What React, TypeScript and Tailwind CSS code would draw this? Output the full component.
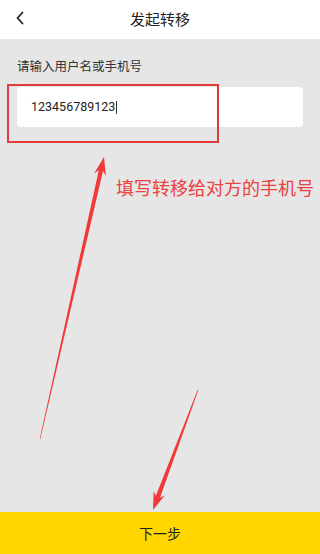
import React from "react";

const cjk = { fontFamily: '"Noto Sans CJK SC", "Noto Sans", sans-serif' };

function BackIcon() {
  return (
    <svg width="10" height="14" viewBox="0 0 10 14" fill="none">
      <path d="M7.5 1.5 L2.5 7 L7.5 12.5" stroke="#222" strokeWidth="1.8" strokeLinecap="round" strokeLinejoin="round" />
    </svg>
  );
}

// annotation overlay: hand-drawn red arrows from the screenshot
function Arrows() {
  return (
    <svg className="absolute inset-0 pointer-events-none" width="320" height="554" viewBox="0 0 320 554">
      <polygon
        fill="#f03a3a"
        points="39.7,438.9 98.8,170.2 94.2,173.3 104,157 105.9,175.9 103,171.1 40.3,439.1"
      />
      <polygon
        fill="#f03a3a"
        points="197.6,389.9 155.8,496.1 153.7,491.1 153,510 164.9,495.3 160,497.7 198.4,390.1"
      />
    </svg>
  );
}

export default function App() {
  return (
    <div className="relative w-[320px] h-[554px] flex flex-col bg-[#e6e6e6] overflow-hidden" style={cjk}>
      <div className="h-[39px] bg-white flex items-center relative shrink-0">
        <div className="absolute left-[15px] top-[11px]">
          <BackIcon />
        </div>
        <div className="flex-1 text-center text-[15px] text-[#222]">发起转移</div>
      </div>

      <div className="px-[17px] pt-[19px]">
        <div className="text-[12.5px] text-[#333] leading-[16px]">请输入用户名或手机号</div>
        <div className="mt-[13px] h-[40px] bg-white rounded-[4px] flex items-center pl-[14px]">
          <span className="text-[12.5px] text-[#222]" style={{ fontFamily: "Roboto, sans-serif" }}>
            123456789123
          </span>
          <span className="ml-[1px] w-[1px] h-[13px] bg-[#333]" />
        </div>
      </div>

      <div className="flex-1 relative">
        <div className="absolute left-[116px] top-[48px] text-[18px] leading-[24px] text-[#ea4141] whitespace-nowrap">
          填写转移给对方的手机号
        </div>
      </div>

      <div className="h-[42px] bg-[#ffd600] flex items-center justify-center shrink-0">
        <span className="text-[14px] text-[#222]">下一步</span>
      </div>

      <div className="absolute left-[7px] top-[84px] w-[212px] h-[59px] border-2 border-[#e23b3b]" />
      <Arrows />
    </div>
  );
}
